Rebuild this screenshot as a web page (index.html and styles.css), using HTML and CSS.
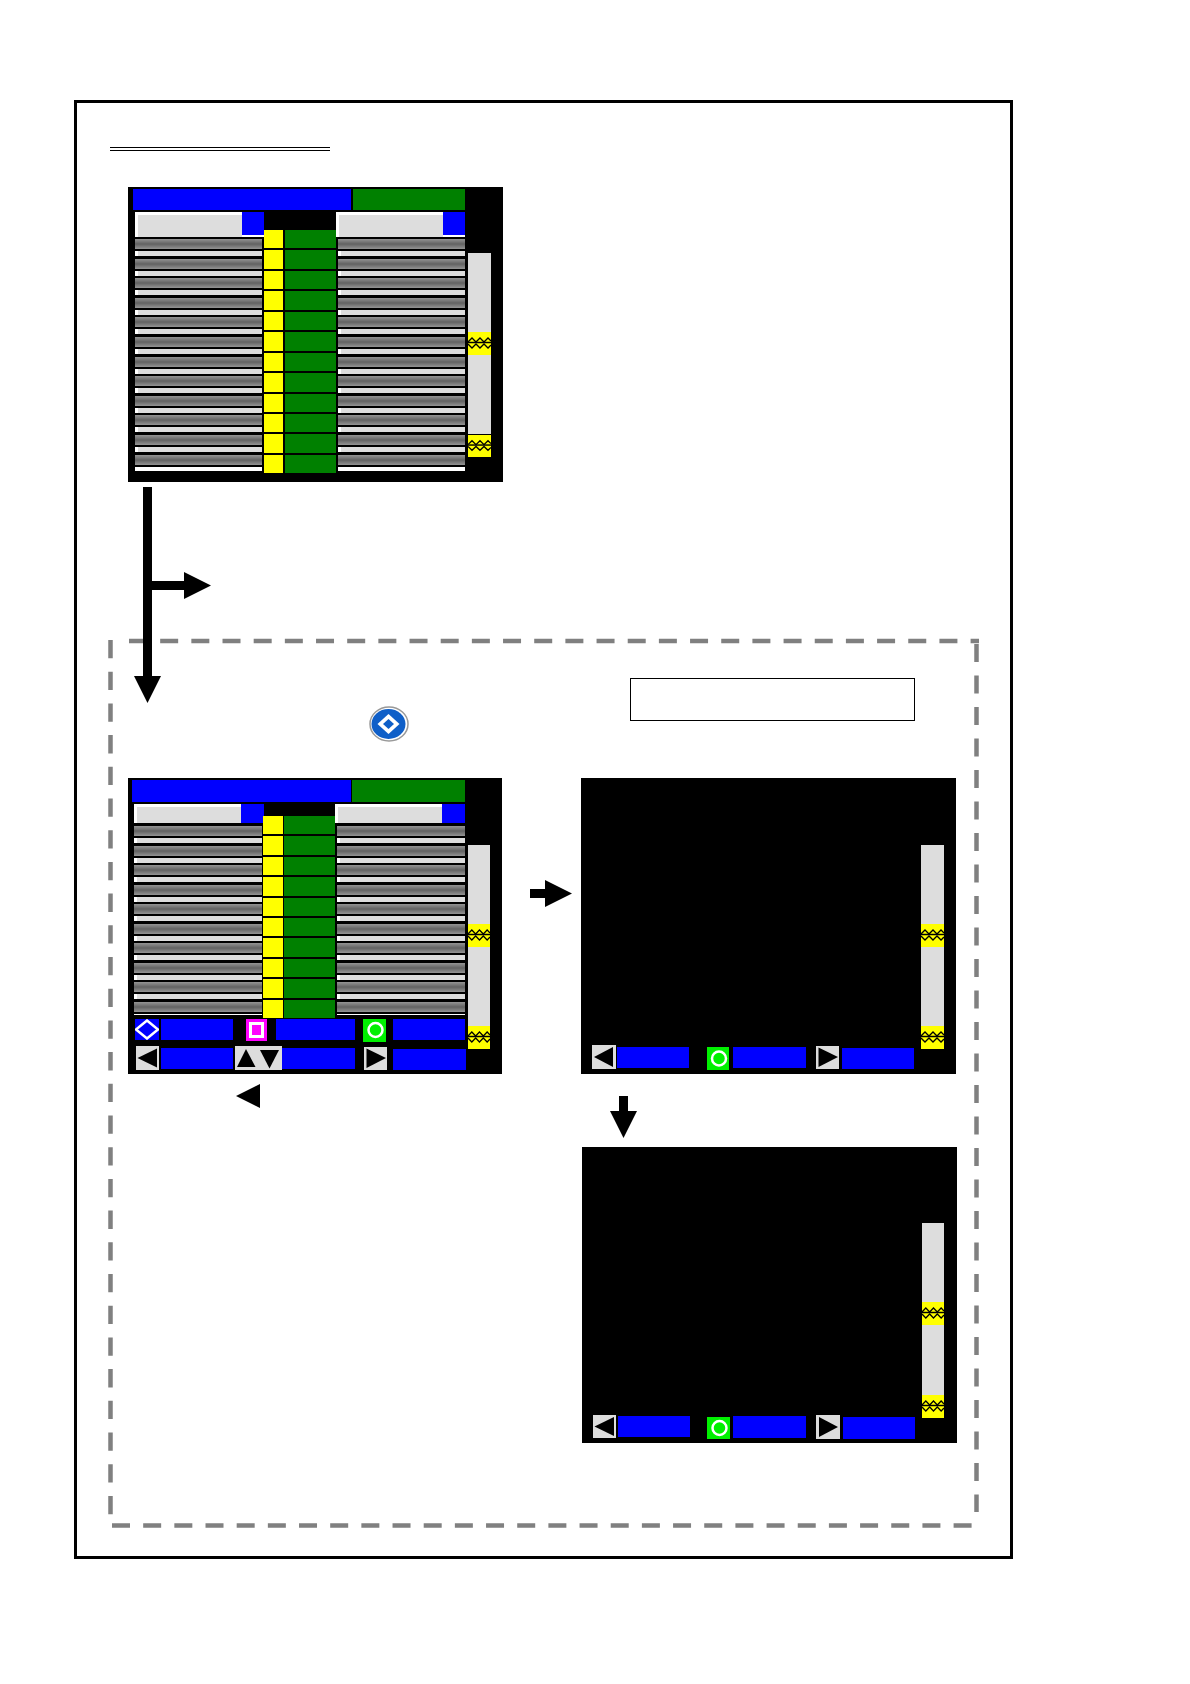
FILE: index.html
```html
<!DOCTYPE html>
<html lang="en">

<head>
    <meta charset="UTF-8">
    <title>Screen flow</title>
    <link rel="stylesheet" href="styles.css">
</head>

<body>
<div class="frame">
    <div class="title-rule"></div>

    <!-- list screen, top -->
    <div class="screen screen-top">
        <div class="main">
            <div class="title-bar"><div class="title-blue"></div><div class="title-green"></div></div>
            <div class="body">
                <div class="col">
                    <div class="label"><div class="label-fill"></div><div class="label-tag"></div></div>
                    <div class="row"></div><div class="row"></div><div class="row"></div><div class="row"></div>
                    <div class="row"></div><div class="row"></div><div class="row"></div><div class="row"></div>
                    <div class="row"></div><div class="row"></div><div class="row"></div><div class="row"></div>
                </div>
                <div class="centre">
                    <div class="cell"></div><div class="cell"></div><div class="cell"></div><div class="cell"></div>
                    <div class="cell"></div><div class="cell"></div><div class="cell"></div><div class="cell"></div>
                    <div class="cell"></div><div class="cell"></div><div class="cell"></div><div class="cell"></div>
                </div>
                <div class="col col-right">
                    <div class="label"><div class="label-fill"></div><div class="label-tag"></div></div>
                    <div class="row"></div><div class="row"></div><div class="row"></div><div class="row"></div>
                    <div class="row"></div><div class="row"></div><div class="row"></div><div class="row"></div>
                    <div class="row"></div><div class="row"></div><div class="row"></div><div class="row"></div>
                </div>
            </div>
        </div>
        <div class="scroll">
            <svg class="thumb" viewBox="0 0 23 23" preserveAspectRatio="none"><use href="#zig"/></svg>
            <svg class="thumb thumb-end" viewBox="0 0 23 23" preserveAspectRatio="none"><use href="#zig"/></svg>
        </div>
    </div>

    <div class="zone">
        <div class="zone-head">
            <svg class="round-icon" viewBox="0 0 40 36">
                <ellipse cx="20" cy="18" rx="19" ry="17" fill="#fff" stroke="#999" stroke-width="1.5"/>
                <ellipse cx="19.5" cy="18" rx="17" ry="15" fill="#0f5fc8"/>
                <polygon points="19.5,8 30.5,18 19.5,28 8.5,18" fill="#fff"/>
                <polygon points="19.5,13 25,18 19.5,23 14,18" fill="#0f5fc8"/>
            </svg>
            <div class="note-box"></div>
        </div>
        <div class="zone-body">

            <!-- list screen with soft keys -->
            <div class="screen screen-keys">
                <div class="main">
                    <div class="title-bar"><div class="title-blue"></div><div class="title-green"></div></div>
                    <div class="body">
                        <div class="col">
                            <div class="label"><div class="label-fill"></div><div class="label-tag"></div></div>
                            <div class="row"></div><div class="row"></div><div class="row"></div><div class="row"></div><div class="row"></div>
                            <div class="row"></div><div class="row"></div><div class="row"></div><div class="row"></div><div class="row"></div>
                        </div>
                        <div class="centre">
                            <div class="cell"></div><div class="cell"></div><div class="cell"></div><div class="cell"></div><div class="cell"></div>
                            <div class="cell"></div><div class="cell"></div><div class="cell"></div><div class="cell"></div><div class="cell"></div>
                        </div>
                        <div class="col col-right">
                            <div class="label"><div class="label-fill"></div><div class="label-tag"></div></div>
                            <div class="row"></div><div class="row"></div><div class="row"></div><div class="row"></div><div class="row"></div>
                            <div class="row"></div><div class="row"></div><div class="row"></div><div class="row"></div><div class="row"></div>
                        </div>
                    </div>
                    <div class="keys keys-one">
                        <svg class="key key-diamond" viewBox="0 0 24 21"><polygon points="12,1.5 23,10.5 12,19.5 1,10.5" fill="none" stroke="#fff" stroke-width="2.5"/></svg>
                        <div class="bar"></div>
                        <svg class="key key-square" viewBox="0 0 21 22"><rect x="4.5" y="4.5" width="12" height="13" fill="none" stroke="#fff" stroke-width="3"/></svg>
                        <div class="bar"></div>
                        <svg class="key key-circle" viewBox="0 0 23 23"><circle cx="12.5" cy="11" r="7" fill="none" stroke="#fff" stroke-width="2.5"/></svg>
                        <div class="bar"></div>
                    </div>
                    <div class="keys keys-two">
                        <svg class="key key-grey" viewBox="0 0 23 24"><polygon points="1.5,12 21,2.5 21,21.5"/></svg>
                        <div class="bar"></div>
                        <svg class="key key-grey" viewBox="0 0 47 24"><polygon points="11,3 20.5,21 2,21"/><polygon points="25,4 44,4 34.5,22.5"/></svg>
                        <div class="bar"></div>
                        <svg class="key key-grey" viewBox="0 0 23 23"><polygon points="2.5,1.5 22,11 2.5,21"/></svg>
                        <div class="bar"></div>
                    </div>
                </div>
                <div class="scroll">
                    <svg class="thumb" viewBox="0 0 23 23" preserveAspectRatio="none"><use href="#zig"/></svg>
                    <svg class="thumb thumb-end" viewBox="0 0 23 23" preserveAspectRatio="none"><use href="#zig"/></svg>
                </div>
            </div>

            <div class="stack">
                <div class="screen screen-blank screen-mid">
                    <div class="main">
                        <div class="keys">
                            <svg class="key key-grey" viewBox="0 0 24 24"><polygon points="2,12 21,2 21,22"/></svg>
                            <div class="bar"></div>
                            <svg class="key key-circle" viewBox="0 0 22 23"><circle cx="12" cy="11.5" r="7" fill="none" stroke="#fff" stroke-width="2.5"/></svg>
                            <div class="bar"></div>
                            <svg class="key key-grey" viewBox="0 0 23 23"><polygon points="2.5,1.5 22,11 2.5,21"/></svg>
                            <div class="bar"></div>
                        </div>
                    </div>
                    <div class="scroll">
                        <svg class="thumb" viewBox="0 0 23 23" preserveAspectRatio="none"><use href="#zig"/></svg>
                        <svg class="thumb thumb-end" viewBox="0 0 23 23" preserveAspectRatio="none"><use href="#zig"/></svg>
                    </div>
                </div>

                <div class="screen screen-blank screen-low">
                    <div class="main">
                        <div class="keys">
                            <svg class="key key-grey" viewBox="0 0 23 23"><polygon points="1.5,11.5 21,2 21,21"/></svg>
                            <div class="bar"></div>
                            <svg class="key key-circle" viewBox="0 0 23 22"><circle cx="12.5" cy="11" r="7" fill="none" stroke="#fff" stroke-width="2.5"/></svg>
                            <div class="bar"></div>
                            <svg class="key key-grey" viewBox="0 0 24 24"><polygon points="3,2 22,12 3,22"/></svg>
                            <div class="bar"></div>
                        </div>
                    </div>
                    <div class="scroll">
                        <svg class="thumb" viewBox="0 0 23 23" preserveAspectRatio="none"><use href="#zig"/></svg>
                        <svg class="thumb thumb-end" viewBox="0 0 23 23" preserveAspectRatio="none"><use href="#zig"/></svg>
                    </div>
                </div>
            </div>
        </div>
    </div>

    <!-- dashes and arrows, drawn in page coordinates -->
    <svg class="overlay" viewBox="77 103 933 1453">
        <defs>
            <g id="zig" fill="none" stroke="#000">
                <path d="M0 10 L4 6 L8 10 L12 6 L16 10 L20 6 L23 9" stroke-width="1.3"/>
                <path d="M0 10.5 H23" stroke-width="1.5"/>
                <path d="M0 12 L4 16 L8 12 L12 16 L16 12 L20 16 L23 13" stroke-width="1.3"/>
            </g>
        </defs>
        <line class="dash" x1="129" y1="641" x2="979" y2="641"/>
        <line class="dash" x1="112" y1="1525.5" x2="976" y2="1525.5"/>
        <line class="dash dash-v" x1="110.5" y1="640" x2="110.5" y2="1520"/>
        <line class="dash dash-r" x1="976.5" y1="644" x2="976.5" y2="1512"/>
        <polygon points="143,487 152,487 152,581 184,581 184,572 211,585.5 184,599 184,590 152,590 152,676 161,676 147.5,703 134,676 143,676"/>
        <polygon points="530,889 545,889 545,880 572,893.5 545,907 545,898 530,898"/>
        <polygon points="619,1096 628,1096 628,1111 637,1111 623.5,1138 610,1111 619,1111"/>
        <polygon points="236,1096 260,1084 260,1108"/>
    </svg>
</div>
</body>
</html>
```

FILE: styles.css
```css
body {
    margin: 0;
    background-color: #FFFFFF;
    font-family: "Liberation Sans", Arial, sans-serif;
}
svg {
    display: block;
}

.frame {
    position: relative;
    box-sizing: border-box;
    width: 939px;
    height: 1459px;
    margin: 100px 0 0 74px;
    border: 3px solid #000000;
}
.overlay {
    position: absolute;
    left: 0;
    top: 0;
    width: 933px;
    height: 1453px;
}
.dash {
    stroke: #808080;
    stroke-width: 4.5;
    stroke-dasharray: 18 13.17;
}
.dash-v {
    stroke-dasharray: 18.3 13.4;
}
.dash-r {
    stroke-dasharray: 18 13.5;
}

.title-rule {
    box-sizing: border-box;
    width: 220px;
    height: 4px;
    margin: 44px 0 0 33px;
    border-top: 1px solid #000000;
    border-bottom: 1px solid #000000;
}

/* screens */
.screen {
    display: flex;
    align-items: flex-start;
    box-sizing: border-box;
    width: 375px;
    height: 296px;
    background-color: #000000;
}
.screen-top {
    height: 295px;
    margin: 36px 0 0 51px;
    padding: 2px 0 0 5px;
}
.screen-keys {
    width: 374px;
    margin-left: 20px;
    padding: 2px 0 0 4px;
}
.screen-top .main {
    width: 332px;
}
.screen-keys .main {
    width: 334px;
}

.title-bar {
    display: flex;
    height: 21px;
}
.screen-keys .title-bar {
    height: 22px;
}
.title-blue {
    width: 218px;
    background-color: #0000FF;
}
.title-green {
    width: 112px;
    margin-left: 2px;
    background-color: #008000;
}
.screen-keys .title-blue {
    width: 219px;
}
.screen-keys .title-green {
    width: 113px;
    margin-left: 1px;
}

/* list area */
.body {
    display: flex;
    align-items: flex-start;
    margin-left: 2px;
}
.screen-keys .body {
    height: 216px;
}
.col {
    width: 129px;
    padding-top: 2px;
}
.screen-keys .col {
    width: 130px;
}
.label {
    display: flex;
    box-sizing: border-box;
    height: 25px;
    margin-bottom: 2px;
    padding-left: 3px;
    background-color: #FFFFFF;
}
.screen-keys .label {
    height: 19px;
    margin-bottom: 3px;
}
.label-fill {
    flex: 1;
    margin-top: 3px;
    background-color: #DDDDDD;
}
.label-tag {
    width: 22px;
    height: 23px;
    background-color: #0000FF;
}
.screen-keys .label-tag {
    width: 23px;
    height: 19px;
}

.row {
    width: 127px;
    height: 19.6px;
}
.screen-keys .row {
    width: 128px;
    height: 19.55px;
}
.col-right .row {
    margin-left: 2px;
}
.row::before {
    content: "";
    display: block;
    height: 10px;
    background: linear-gradient(#949494, #626262 50%, #949494);
}
.row::after {
    content: "";
    display: block;
    box-sizing: border-box;
    height: 5px;
    margin-top: 2px;
    border-left: 3px solid #FFFFFF;
    background-color: #DDDDDD;
}
.row:last-child::after {
    height: 4px;
    background-color: #FFFFFF;
}
.screen-keys .row:last-child::after {
    height: 1.5px;
}

.centre {
    display: flex;
    flex-direction: column;
    gap: 2px;
    width: 72px;
    margin-top: 20px;
}
.screen-keys .centre {
    width: 72px;
    margin-top: 14px;
    margin-left: -1px;
}
.cell {
    display: flex;
    gap: 2px;
    height: 18.45px;
}
.screen-keys .cell {
    gap: 1px;
    height: 18.4px;
}
.cell::before {
    content: "";
    width: 19px;
    background-color: #FFFF00;
}
.screen-keys .cell::before {
    width: 20px;
}
.cell::after {
    content: "";
    width: 51px;
    background-color: #008000;
}

/* scroll bar */
.scroll {
    display: flex;
    flex-direction: column;
    width: 23px;
    height: 204px;
    margin: 64px 0 0 3px;
    padding-top: 79px;
    box-sizing: border-box;
    background-color: #DDDDDD;
}
.screen-keys .scroll {
    width: 22px;
    margin: 65px 0 0 2px;
}
.thumb {
    width: 100%;
    height: 23px;
    background-color: #FFFF00;
}
.thumb-end {
    margin-top: auto;
}
.screen-top .thumb-end {
    height: 22px;
    border-top: 1px solid #000000;
}

/* soft keys */
.keys {
    display: flex;
    align-items: flex-start;
}
.key {
    flex: none;
}
.key-grey {
    background-color: #DDDDDD;
}
.key-diamond {
    background-color: #0000FF;
}
.key-square {
    background-color: #FF00FF;
}
.key-circle {
    background-color: #00F000;
}
.bar {
    flex: none;
    height: 21px;
    background-color: #0000FF;
}

.keys-one {
    margin-top: 1px;
}
.keys-one .key-diamond {
    width: 24px;
    height: 21px;
    margin-left: 3px;
}
.keys-one .bar {
    width: 72px;
}
.keys-one .bar:nth-child(2) {
    margin-left: 2px;
}
.keys-one .key-square {
    width: 21px;
    height: 22px;
    margin-left: 13px;
}
.keys-one .bar:nth-child(4) {
    width: 79px;
    margin-left: 9px;
}
.keys-one .key-circle {
    width: 23px;
    height: 23px;
    margin-left: 8px;
}
.keys-one .bar:nth-child(6) {
    margin-left: 7px;
}

.keys-two {
    margin-top: 4px;
}
.keys-two .key:nth-child(1) {
    width: 23px;
    height: 24px;
    margin-left: 4px;
}
.keys-two .bar:nth-child(2) {
    width: 72px;
    margin: 2px 0 0 2px;
}
.keys-two .key:nth-child(3) {
    width: 47px;
    height: 24px;
    margin-left: 2px;
}
.keys-two .bar:nth-child(4) {
    width: 73px;
    margin-top: 2px;
}
.keys-two .key:nth-child(5) {
    width: 23px;
    height: 23px;
    margin: 1px 0 0 9px;
}
.keys-two .bar:nth-child(6) {
    width: 73px;
    margin: 3px 0 0 6px;
}

/* dashed zone */
.zone {
    box-sizing: border-box;
    width: 871px;
    height: 889px;
    margin: 157px 0 0 31px;
}
.zone-head {
    display: flex;
    align-items: flex-start;
    height: 139px;
    padding-left: 261px;
}
.round-icon {
    width: 40px;
    height: 36px;
    margin-top: 67px;
}
.note-box {
    box-sizing: border-box;
    width: 285px;
    height: 43px;
    margin: 39px 0 0 221px;
    border: 1.5px solid #000000;
}
.zone-body {
    display: flex;
    align-items: flex-start;
}
.stack {
    margin-left: 79px;
}

/* screens with only keys and a scroll bar */
.screen-blank {
    padding-left: 11px;
}
.screen-blank .main {
    width: 329px;
}
.screen-blank .bar {
    width: 72px;
}
.screen-mid .main {
    padding-top: 267px;
}
.screen-mid .scroll {
    margin: 67px 0 0 0;
}
.screen-mid .key:nth-child(1) {
    width: 24px;
    height: 24px;
}
.screen-mid .bar:nth-child(2) {
    margin: 2px 0 0 1px;
}
.screen-mid .key:nth-child(3) {
    width: 22px;
    height: 23px;
    margin: 2px 0 0 18px;
}
.screen-mid .bar:nth-child(4) {
    width: 73px;
    margin: 2px 0 0 4px;
}
.screen-mid .key:nth-child(5) {
    width: 23px;
    height: 23px;
    margin: 1px 0 0 10px;
}
.screen-mid .bar:nth-child(6) {
    margin: 3px 0 0 3px;
}

.screen-low {
    margin: 73px 0 0 1px;
}
.screen-low .main {
    padding-top: 268px;
}
.screen-low .scroll {
    width: 22px;
    height: 195px;
    margin: 76px 0 0 0;
}
.screen-low .key:nth-child(1) {
    width: 23px;
    height: 23px;
}
.screen-low .bar:nth-child(2) {
    margin: 1px 0 0 2px;
}
.screen-low .key:nth-child(3) {
    width: 23px;
    height: 22px;
    margin: 2px 0 0 17px;
}
.screen-low .bar:nth-child(4) {
    width: 73px;
    height: 22px;
    margin: 1px 0 0 3px;
}
.screen-low .key:nth-child(5) {
    width: 24px;
    height: 24px;
    margin-left: 10px;
}
.screen-low .bar:nth-child(6) {
    height: 22px;
    margin: 2px 0 0 3px;
}
```
